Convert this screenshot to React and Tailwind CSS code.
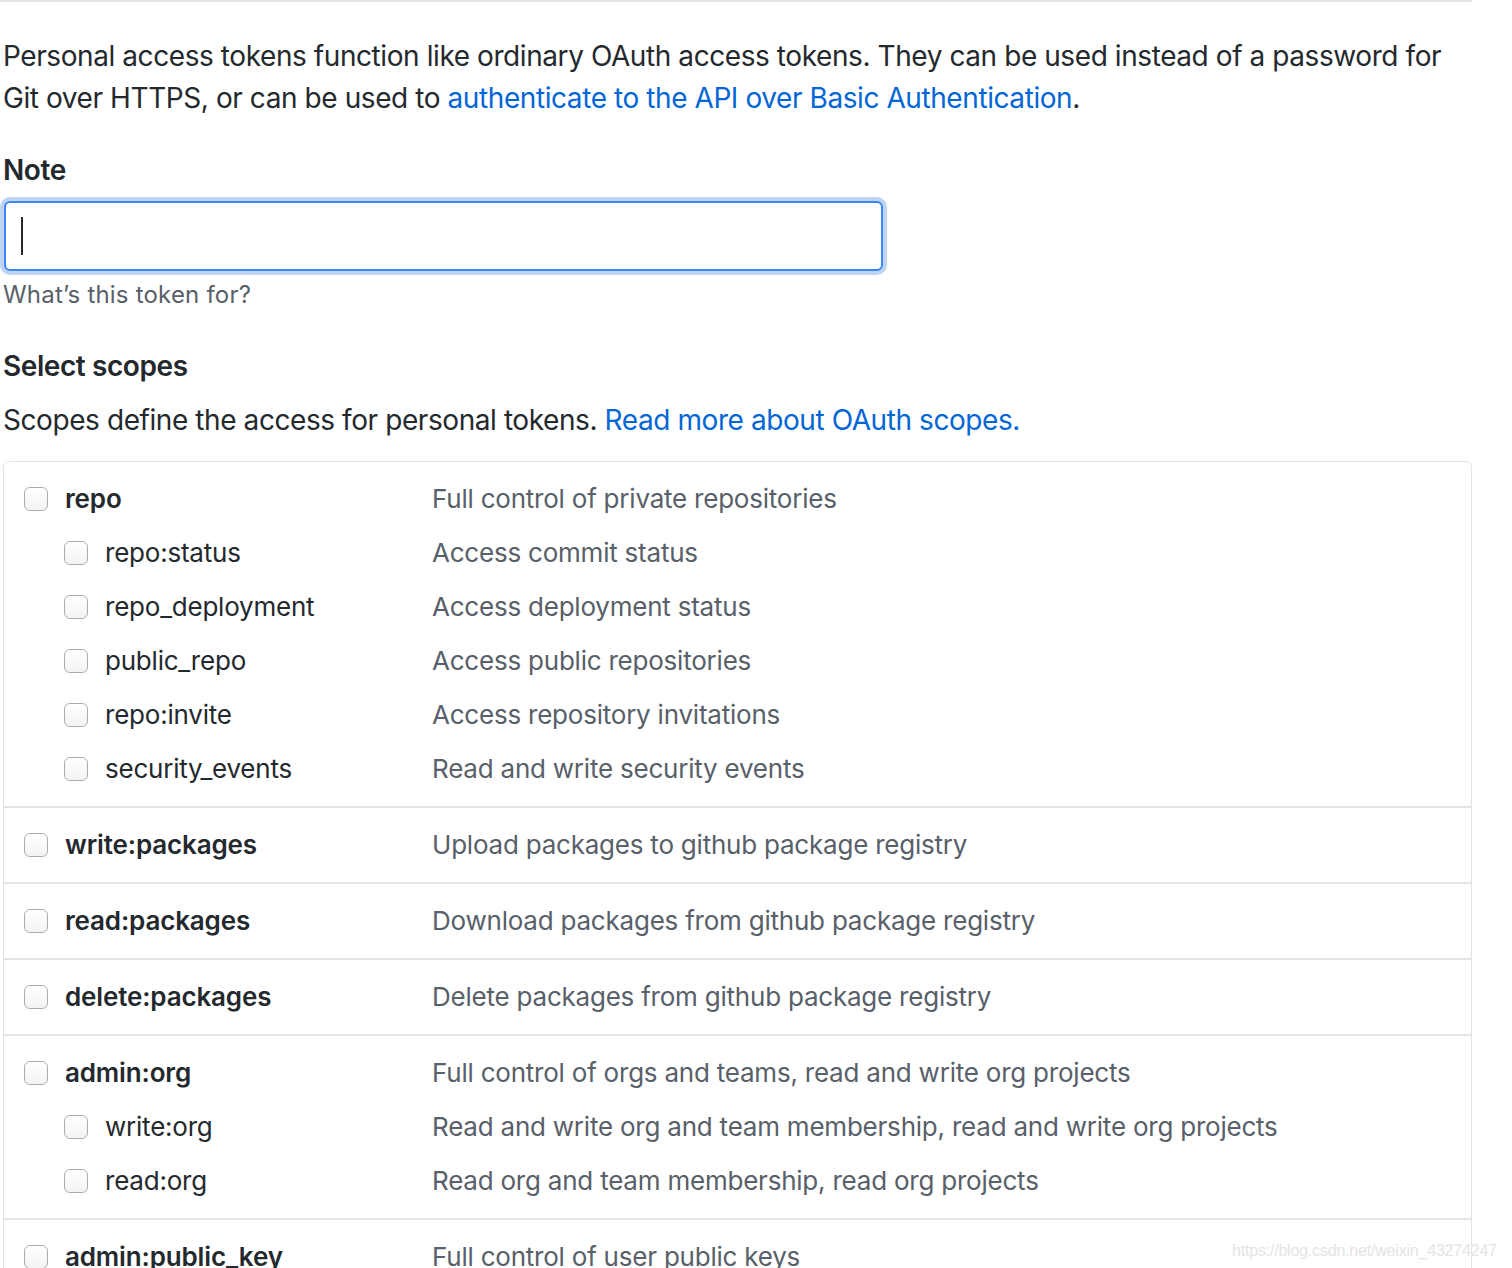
import React from 'react';

const groups = [
  {
    name: 'repo',
    desc: 'Full control of private repositories',
    children: [
      ['repo:status', 'Access commit status'],
      ['repo_deployment', 'Access deployment status'],
      ['public_repo', 'Access public repositories'],
      ['repo:invite', 'Access repository invitations'],
      ['security_events', 'Read and write security events'],
    ],
  },
  { name: 'write:packages', desc: 'Upload packages to github package registry', children: [] },
  { name: 'read:packages', desc: 'Download packages from github package registry', children: [] },
  { name: 'delete:packages', desc: 'Delete packages from github package registry', children: [] },
  {
    name: 'admin:org',
    desc: 'Full control of orgs and teams, read and write org projects',
    children: [
      ['write:org', 'Read and write org and team membership, read and write org projects'],
      ['read:org', 'Read org and team membership, read org projects'],
    ],
  },
  { name: 'admin:public_key', desc: 'Full control of user public keys', children: [] },
];

function Checkbox() {
  return (
    <span className="w-[24px] h-[24px] shrink-0 rounded-[6px] border-[1.5px] border-[#ababab] bg-gradient-to-b from-white to-[#f4f4f4]" />
  );
}

function ScopeRow({ name, desc, child }) {
  return (
    <div className="flex items-center h-[54px] text-[26px] tracking-[-0.22px]">
      <div className={`flex items-center w-[428px] ${child ? 'pl-[60px]' : 'pl-[20px]'}`}>
        <Checkbox />
        <span className={`ml-[17px] ${child ? 'font-normal' : 'font-semibold tracking-[-0.15px]'} text-[#24292e]`}>{name}</span>
      </div>
      <div className="text-[#586069]">{desc}</div>
    </div>
  );
}

export default function App() {
  return (
    <div className="relative w-[1512px] h-[1268px] overflow-hidden bg-white" style={{ fontFamily: 'Inter, "Noto Sans", sans-serif' }}>
      <div className="w-[1472px] border-t-2 border-[#e1e4e8]">
        <div className="pl-[3px] pt-[33px] text-[28px] leading-[42px] text-[#24292e] tracking-[-0.42px]">
          {/* Intro */}
          <p>
            Personal access tokens function like ordinary OAuth access tokens. They can be used instead of a password for
            Git over HTTPS, or can be used to{' '}
            <a className="text-[#0366d6]">authenticate to the API over Basic Authentication</a>.
          </p>

          {/* Note field */}
          <div className="mt-[30px] font-semibold">Note</div>
          <div className="-ml-[3px] mt-[6px] w-[887px] rounded-[10px] bg-[#bfd4f0] p-[4px]">
            <div className="h-[70px] rounded-[6px] border-2 border-[#3a87f5] bg-white flex items-center pl-[15px]">
              <span className="w-[2px] h-[38px] bg-[#24292e]" />
            </div>
          </div>
          <div className="mt-[2px] text-[24px] leading-[36px] tracking-[0.2px] text-[#586069]">What’s this token for?</div>

          {/* Scopes */}
          <div className="mt-[32px] font-semibold">Select scopes</div>
          <p className="mt-[12px]">
            Scopes define the access for personal tokens.{' '}
            <a className="text-[#0366d6]">Read more about OAuth scopes.</a>
          </p>

          <div className="mt-[20px] w-[1469px] rounded-[6px] border border-[#e1e4e8]">
            {groups.map((g, i) => (
              <div key={g.name} className={`py-[10px] ${i > 0 ? 'border-t-2 border-[#e1e4e8]' : ''}`}>
                <ScopeRow name={g.name} desc={g.desc} />
                {g.children.map(([n, d]) => (
                  <ScopeRow key={n} name={n} desc={d} child />
                ))}
              </div>
            ))}
          </div>
        </div>
      </div>

      {/* watermark */}
      <div className="absolute left-[1232px] top-[1239px] text-[16px] text-[#e4e4e4] tracking-[-0.2px]" style={{ fontFamily: '"Liberation Sans", Arial, sans-serif' }}>
        https://blog.csdn.net/weixin_43274247
      </div>
    </div>
  );
}
